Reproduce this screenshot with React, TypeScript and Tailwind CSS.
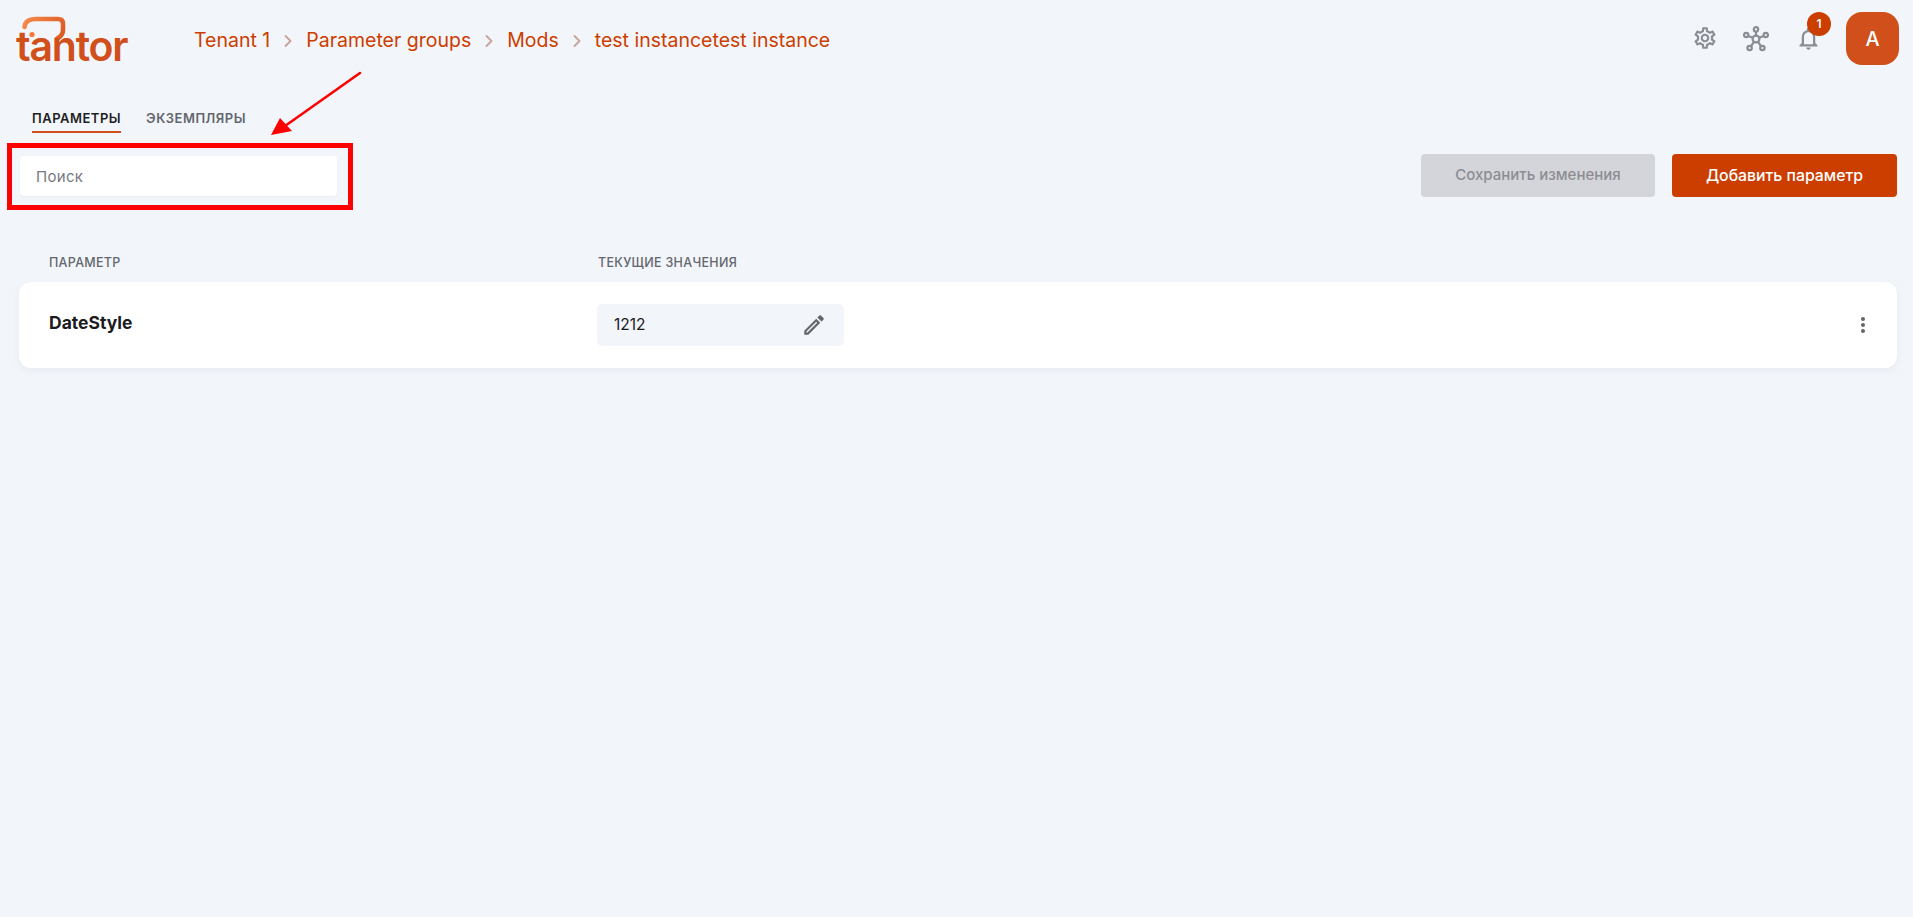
import { ChevronRight } from "lucide-react";
import { MdMoreVert, MdOutlineEdit, MdOutlineNotifications, MdOutlineSettings } from "react-icons/md";

const crumbs = ["Tenant 1", "Parameter groups", "Mods", "test instancetest instance"];

function Logo() {
  return (
    <div className="relative w-[114px] h-[46px] shrink-0">
      <svg viewBox="0 0 114 46" className="absolute left-0 top-0 w-[114px] h-[46px]" fill="none">
        <defs>
          <linearGradient id="bubble" x1="8" y1="3" x2="47" y2="22" gradientUnits="userSpaceOnUse">
            <stop offset="0" stopColor="#F58A4B" />
            <stop offset="1" stopColor="#DC5C22" />
          </linearGradient>
        </defs>
        <path
          d="M8.5 11 C9 6 12 3 20 3 L42 3 C45.5 3 47 5 47 8 L47 14 C47 18 45.5 20.5 41 22.5"
          stroke="url(#bubble)"
          strokeWidth="4.6"
          strokeLinecap="round"
        />
        <circle cx="16" cy="18.5" r="2.6" fill="#F47A3A" />
      </svg>
      <span className="absolute left-0 bottom-[-7px] text-[41px] leading-[46px] font-semibold tracking-[-1.2px] text-[#D14F1A] font-['Inter',sans-serif]">
        tantor
      </span>
    </div>
  );
}

function HubIcon() {
  return (
    <svg viewBox="0 0 26 26" className="w-[26px] h-[26px]" fill="none" stroke="#8A8D93" strokeWidth="2.2">
      <circle cx="13" cy="13" r="3.4" />
      <circle cx="13" cy="3.4" r="2.2" />
      <circle cx="3.2" cy="9" r="2.2" />
      <circle cx="22.8" cy="9" r="2.2" />
      <circle cx="6.6" cy="22" r="2.2" />
      <circle cx="19.4" cy="22" r="2.2" />
      <path d="M13 5.6V9.6M5.2 10 10 11.8M20.8 10 16 11.8M8 20.2 11 15.8M18 20.2 15 15.8" />
    </svg>
  );
}

function Header() {
  return (
    <header className="flex items-center h-[77px] pl-4 pr-[14px]">
      <Logo />
      <nav className="flex items-center ml-[64px] mt-[4px] text-[19.5px] font-normal text-[#CC3D00] font-['Inter',sans-serif]">
        {crumbs.map((crumb, index) => (
          <div key={crumb} className="flex items-center">
            {index > 0 && <ChevronRight className="w-[20px] h-[20px] mx-[8px] text-[#C9A199]" strokeWidth={2.2} />}
            <span>{crumb}</span>
          </div>
        ))}
      </nav>
      <div className="flex items-center ml-auto">
        <MdOutlineSettings className="w-[26px] h-[26px] -mt-[2px] text-[#8A8D93]" />
        <div className="ml-[25px]">
          <HubIcon />
        </div>
        <div className="relative ml-[26px]">
          <MdOutlineNotifications className="w-[27px] h-[27px] text-[#8A8D93]" />
          <span className="absolute left-[12px] top-[-13px] flex items-center justify-center w-6 h-6 rounded-full bg-[#CC3D00] text-white text-[12px] font-semibold font-['Inter',sans-serif]">
            1
          </span>
        </div>
        <div className="ml-[24px] flex items-center justify-center w-[53px] h-[53px] rounded-[16px] bg-[#D14F1A] text-white text-[20px] font-medium font-['Inter',sans-serif]">
          A
        </div>
      </div>
    </header>
  );
}

export default function App() {
  return (
    <div className="relative min-h-[917px] bg-[#F2F5FA] font-['Inter',sans-serif] overflow-hidden">
      <Header />

      <div className="flex gap-[25px] pl-8 mt-[33px] text-[13px] font-semibold tracking-[0.5px] leading-[16px]">
        <div className="pb-[5px] border-b-2 border-[#D14F1A] text-[#1F1F22]">ПАРАМЕТРЫ</div>
        <div className="text-[#63666D]">ЭКЗЕМПЛЯРЫ</div>
      </div>

      <div className="flex items-start justify-between pl-5 pr-4 mt-[23px]">
        <input
          placeholder="Поиск"
          className="w-[317px] h-[40px] px-4 rounded bg-white text-[15px] tracking-[0.3px] placeholder:text-[#77797E] outline-none shadow-[0_1px_2px_rgba(30,40,70,0.05)]"
        />
        <div className="flex gap-[17px] -mt-[2px]">
          <button className="w-[234px] h-[43px] rounded bg-[#D4D5DA] text-[#8C8D92] text-[15px] font-medium">
            Сохранить изменения
          </button>
          <button className="w-[225px] h-[43px] rounded bg-[#CC3D00] text-white text-[15.8px] font-medium">
            Добавить параметр
          </button>
        </div>
      </div>

      <div className="flex pl-[49px] mt-[58px] text-[12.5px] font-medium tracking-[0.3px] leading-[16px] text-[#63666D]">
        <div className="w-[549px]">ПАРАМЕТР</div>
        <div>ТЕКУЩИЕ ЗНАЧЕНИЯ</div>
      </div>

      <div className="flex items-center h-[86px] ml-[19px] mr-4 mt-[11px] pb-px pl-[30px] pr-[22px] rounded-xl bg-white shadow-[0_3px_8px_rgba(30,40,70,0.05)]">
        <div className="w-[548px] pb-[2px] text-[17.5px] font-bold text-[#1C1C1F]">DateStyle</div>
        <div className="flex items-center justify-between w-[247px] h-[42px] pl-[17px] pr-[17px] rounded-[5px] bg-[#F2F5FA] text-[15.5px] text-[#1C1C1F]">
          <span>1212</span>
          <MdOutlineEdit className="w-[26px] h-[26px] text-[#63666D]" />
        </div>
        <MdMoreVert className="w-6 h-6 ml-auto text-[#63666D]" />
      </div>

      {/* red annotation drawn on top of the screenshot */}
      <div className="absolute left-[7px] top-[143px] w-[346px] h-[67px] border-[5px] border-[#FF0000]" />
      <svg className="absolute left-[265px] top-[65px] w-[105px] h-[80px]" viewBox="0 0 105 80" fill="none">
        <path d="M95 8 20 61" stroke="#FF0000" strokeWidth="2.6" strokeLinecap="round" />
        <path d="M6 70 15 53 27 66Z" fill="#FF0000" />
      </svg>
    </div>
  );
}
